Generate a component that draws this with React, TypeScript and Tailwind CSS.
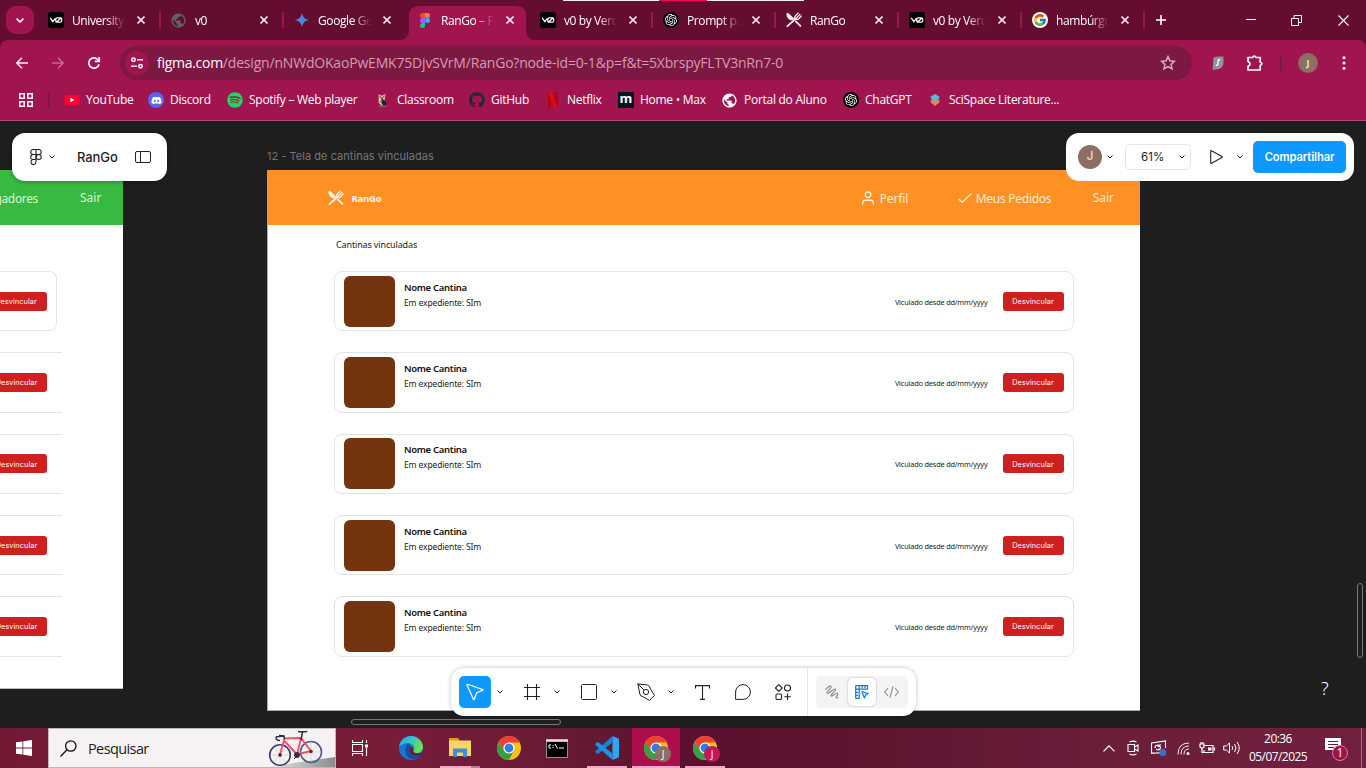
import React from "react";
import { FaDiscord, FaSpotify, FaYoutube, FaGithub } from "react-icons/fa";
import { SiOpenai } from "react-icons/si";
import { FcGoogle } from "react-icons/fc";
import { MdPublic } from "react-icons/md";

function V0() {
  return (
    <svg viewBox="0 0 16 16" className="size-4">
      <rect width="16" height="16" rx="2.5" fill="#000" />
      <path d="M2.2 5.8 4.900 9.600 7.300 6.300M7.800 7.200v2q0 1 1.200 1h3.400q1.300 0 1.300-1.200V7.100q0-1.200-1.300-1.200H9.100q-1.300 0-1.300 1.300M8.600 9.800 13 6.200" fill="none" stroke="#fff" strokeWidth="1.2" />
    </svg>
  );
}

function Cutlery({ className }: { className: string }) {
  return (
    <svg viewBox="0 0 16 16" className={className} fill="none" stroke="#fdf6f0" strokeLinecap="round">
      <path d="M.6 1C0 3.800 1.800 7 4.600 8.200L6.900 8 8 6.400 2.600 1.200Q1.200.3.600 1Z" fill="#fdf6f0" stroke="none" />
      <path d="M10 9.600 14.400 13.800M1.400 14.200 9.600 6.800" strokeWidth="1.8" />
      <path d="M8.700 7.300C8.100 5.600 8.700 4.500 9.800 3.400L12 1.200M9.800 6.600 13.900 2.400M9 7.500c1.700.5 3 0 4-1L15.200 4" strokeWidth="1.3" />
    </svg>
  );
}

function FigmaMark() {
  return (
    <svg viewBox="0 0 10 15" className="h-[15px] w-2.5">
      <path d="M5 0H2.5a2.5 2.5 0 0 0 0 5H5Z" fill="#f24e1e" />
      <path d="M5 0h2.5a2.5 2.5 0 0 1 0 5H5Z" fill="#ff7262" />
      <path d="M5 5H2.5a2.5 2.5 0 0 0 0 5H5Z" fill="#a259ff" />
      <circle cx="7.5" cy="7.5" r="2.5" fill="#1abcfe" />
      <path d="M5 10H2.5A2.5 2.5 0 1 0 5 12.5Z" fill="#0acf83" />
    </svg>
  );
}

function Gpt() {
  return (
    <span className="grid size-4 place-items-center rounded-full bg-black">
      <SiOpenai className="size-3 text-white" />
    </span>
  );
}

function Gemini() {
  return (
    <svg viewBox="0 0 16 16" className="size-4">
      <defs>
        <linearGradient id="gem" x1="0" y1="1" x2="1" y2="0">
          <stop offset="0" stopColor="#6b8ff0" />
          <stop offset=".6" stopColor="#3f8ae0" />
          <stop offset="1" stopColor="#6f7fd8" />
        </linearGradient>
      </defs>
      <path d="M8 1C8.9 5.300 10.700 7.100 15 8 10.700 8.900 8.900 10.700 8 15 7.100 10.700 5.300 8.900 1 8 5.300 7.100 7.100 5.300 8 1Z" fill="url(#gem)" />
    </svg>
  );
}

function Cross() {
  return (
    <svg viewBox="0 0 8 8" className="size-2 shrink-0" stroke="#f6e6ec" strokeWidth="1.6">
      <path d="M.5.5l7 7M7.500.5l-7 7" />
    </svg>
  );
}

type TabInfo = { title: string; icon: React.ReactNode; active?: boolean; divider?: boolean };
const tabs: TabInfo[] = [
  { title: "University", icon: <V0 />, divider: true },
  { title: "v0", icon: <MdPublic className="-ml-0.5 size-[17px] text-[#5f6368]" />, divider: true },
  { title: "Google Ge", icon: <Gemini /> },
  { title: "RanGo – F", icon: <FigmaMark />, active: true },
  { title: "v0 by Verc", icon: <V0 />, divider: true },
  { title: "Prompt pa", icon: <Gpt />, divider: true },
  { title: "RanGo", icon: <Cutlery className="size-4" />, divider: true },
  { title: "v0 by Verc", icon: <V0 />, divider: true },
  { title: "hambúrgu", icon: <FcGoogle className="size-4 rounded-full bg-white p-px" />, divider: true },
];

function Tab({ title, icon, active, divider }: TabInfo) {
  return (
    <div className="relative flex h-10 w-[123px] shrink-0 items-center">
      {active && (
        <svg viewBox="0 0 137 34" className="absolute -left-[9px] top-1.5 h-[34px] w-[137px]" fill="#a0154f">
          <path d="M0 34Q10 34 10 24V10Q10 0 20 0H117Q127 0 127 10V24Q127 34 137 34Z" />
        </svg>
      )}
      <div className="relative flex flex-1 items-center pl-[9px]">
        <span className="grid size-4 place-items-center">{icon}</span>
        <span className="ml-2 w-[53px] overflow-hidden whitespace-nowrap pt-px text-[12px] leading-4 tracking-[-0.400px] text-white [mask-image:linear-gradient(to_right,#000_65%,transparent_100%)]">
          {title}
        </span>
        <span className="ml-3">
          <Cross />
        </span>
      </div>
      {divider && <span className="mr-px h-4 w-0.5 bg-[#a0154f]" />}
    </div>
  );
}

function TabStrip() {
  return (
    <div className="relative flex h-10 bg-[#650d30]">
      <div className="flex w-[39px] items-center pl-1.5">
        <div className="grid size-7 place-items-center rounded-[10px] bg-[#a0154f]">
          <svg viewBox="0 0 8 5" className="h-[5px] w-2" fill="none" stroke="#fff" strokeWidth="1.6">
            <path d="M.6.6 4 4 7.400.6" />
          </svg>
        </div>
      </div>
      {tabs.map((t, i) => (
        <Tab key={i} {...t} />
      ))}
      <div className="flex flex-1 items-center pl-[10px]">
        <svg viewBox="0 0 10 10" className="size-2.5" stroke="#fff" strokeWidth="1.6">
          <path d="M5 0v10M0 5h10" />
        </svg>
        <svg viewBox="0 0 10 10" className="ml-20 size-2.5" stroke="#fff">
          <path d="M0 4.500h10" />
        </svg>
        <svg viewBox="0 0 11 11" className="ml-[35px] size-[11px]" fill="none" stroke="#fff">
          <path d="M.5 3.500h7v7h-7zM3 3.500V.5h7.500v7H7.500" />
        </svg>
        <svg viewBox="0 0 11 11" className="ml-9 size-[11px]" stroke="#fff" strokeWidth="1.100">
          <path d="M.5.5l10 10M10.500.5l-10 10" />
        </svg>
      </div>
      <div className="absolute left-[563px] top-0 flex h-px w-[241px] bg-[#f1eef0]">
        <span className="ml-24 h-px w-12 bg-[#f0095f]" />
      </div>
    </div>
  );
}

function Toolbar() {
  return (
    <div className="bg-[#650d30]">
      <div className="flex h-[46px] items-center rounded-t-lg bg-[#a0154f]">
        <svg viewBox="0 0 12 12" className="ml-4 size-3" fill="none" stroke="#fbe9f0" strokeWidth="1.600">
          <path d="M12 6H1M6 .8.8 6 6 11.200" />
        </svg>
        <svg viewBox="0 0 12 12" className="ml-6 size-3" fill="none" stroke="#c4688f" strokeWidth="1.600">
          <path d="M0 6h11M6 .8 11.200 6 6 11.200" />
        </svg>
        <svg viewBox="0 0 14 14" className="ml-[23px] size-3.5" fill="none" stroke="#fff" strokeWidth="1.700">
          <path d="M12 8.200A5.200 5.200 0 1 1 11.200 4L12 5" />
          <path d="M12.200 1v4.400H7.800" />
        </svg>
        <div className="ml-[19px] flex h-[34px] w-[1072px] items-center rounded-full bg-[#7d1842] pl-[5px]">
          <span className="grid size-6 place-items-center rounded-full bg-[#a0154f]">
            <svg viewBox="0 0 12 12" className="size-3" fill="none" stroke="#fff" strokeWidth="1.500">
              <circle cx="2.500" cy="2.800" r="1.700" />
              <path d="M6.200 2.800H12M0 9.200h5.800" />
              <circle cx="9.500" cy="9.200" r="1.700" />
            </svg>
          </span>
          <span className="ml-2 flex-1 whitespace-nowrap text-[14px] leading-5 tracking-[-0.190px] text-[#d39bb4]">
            <span className="tracking-[-0.280px] text-white">figma.com</span>/design/nNWdOKaoPwEMK75DjvSVrM/RanGo?node-id=0-1&amp;p=f&amp;t=5XbrspyFLTV3nRn7-0
          </span>
          <svg viewBox="0 0 16 16" className="mr-4 size-4" fill="none" stroke="#d3b9c6" strokeWidth="1.400">
            <path d="m8 1.600 1.900 4.200 4.500.5-3.300 3.100.9 4.500L8 11.600l-4 2.300.9-4.500L1.600 6.300l4.500-.5Z" />
          </svg>
        </div>
        <svg viewBox="0 0 12 14" className="ml-5 h-3.5 w-3">
          <path d="M1.500 1.500Q5 0 11.500.5V7q-.5 5-5 6L.5 14Z" fill="#8f9296" />
          <path d="M8.300 3.500Q6 3.500 6 5.500V7.500q0 2-2.300 2" fill="none" stroke="#fff" strokeWidth="1.300" />
        </svg>
        <svg viewBox="0 0 16 16" className="ml-[23px] size-4" fill="none" stroke="#fff" strokeWidth="1.700">
          <path d="M1 2.500H5.500Q7.200-.5 9 2.500H13.200V7Q16.500 8.700 13.200 10.400V15H1V11.400Q5 9 1 6.400Z" strokeLinejoin="round" />
        </svg>
        <span className="ml-[17px] h-4 w-0.5 bg-[#7d1842]" />
        <span className="ml-4 grid size-5 place-items-center rounded-full bg-[#8d6e63] text-[9px] font-bold text-[#efe6e3]">J</span>
        <svg viewBox="0 0 4 14" className="ml-6 h-3.5 w-1" fill="#fff">
          <circle cx="2" cy="1.700" r="1.500" />
          <circle cx="2" cy="7" r="1.500" />
          <circle cx="2" cy="12.300" r="1.500" />
        </svg>
      </div>
    </div>
  );
}

function Owl() {
  return (
    <svg viewBox="0 0 12 16" className="h-3.5 w-3">
      <path d="M1 1 4 3l5-2-1 6-3 8-4-4Z" fill="#e9b49a" />
      <path d="m4 5 6 6v4l-5-2Z" fill="#1c1f4a" />
      <path d="M1 15h10" stroke="#7a6a55" strokeWidth="1.500" />
      <path d="m2 4 3 2 3-3M3 9l2 3" stroke="#54302a" fill="none" />
    </svg>
  );
}

function Bookmark({ icon, label, width }: { icon: React.ReactNode; label: string; width: string }) {
  return (
    <div className={"flex shrink-0 items-center " + width}>
      <span className="grid size-4 shrink-0 place-items-center">{icon}</span>
      <span className="ml-[6px] whitespace-nowrap text-[12px] leading-4 tracking-[-0.270px] text-white">{label}</span>
    </div>
  );
}

function Bookmarks() {
  return (
    <div className="flex h-[35px] items-center border-b border-[#b3447a] bg-[#a0154f] pb-[6px]">
      <svg viewBox="0 0 14 14" className="ml-[19px] size-3.5" fill="none" stroke="#fff" strokeWidth="1.500">
        <path d="M.8.8h4.400v4.400H.8zM8.800.8h4.400v4.400H8.800zM.8 8.800h4.400v4.400H.8zM8.800 8.800h4.400v4.400H8.800z" />
      </svg>
      <span className="ml-[15px] mr-3.5 h-4 w-0.5 bg-[#7d1842]" />
      <Bookmark width="w-[84px]" label="YouTube" icon={<FaYoutube className="size-4 bg-[linear-gradient(#fff,#fff)] bg-[length:6px_6px] bg-center bg-no-repeat text-[#ff0033]" />} />
      <Bookmark width="w-[79px]" label="Discord" icon={<span className="grid size-4 place-items-center rounded-full bg-[#5865f2]"><FaDiscord className="size-[11px] text-white" /></span>} />
      <Bookmark width="w-[148px]" label="Spotify – Web player" icon={<FaSpotify className="size-4 text-[#1ed760]" />} />
      <Bookmark width="w-[94px]" label="Classroom" icon={<Owl />} />
      <Bookmark width="w-[76px]" label="GitHub" icon={<FaGithub className="size-4 text-[#24292f]" />} />
      <Bookmark
        width="w-[73px]"
        label="Netflix"
        icon={
          <svg viewBox="0 0 10 16" className="h-4 w-2.5">
            <path d="M0 0h3.300v16H0zM6.700 0H10v16H6.700z" fill="#b1060f" />
            <path d="M0 0h3.300L10 16H6.700z" fill="#e50914" />
          </svg>
        }
      />
      <Bookmark width="w-[104px]" label="Home • Max" icon={<span className="grid size-4 place-items-center bg-[#0a1420] pb-1 text-[13px] font-bold leading-3 text-white">m</span>} />
      <Bookmark width="w-[121px]" label="Portal do Aluno" icon={<MdPublic className="-ml-0.5 size-[17px] text-white" />} />
      <Bookmark width="w-[84px]" label="ChatGPT" icon={<Gpt />} />
      <Bookmark
        width="w-[140px]"
        label="SciSpace Literature..."
        icon={
          <svg viewBox="0 0 12 14" className="h-3 w-3">
            <path d="M1 8l5-2 5 2v2l-5 4-5-4Z" fill="#f0883e" />
            <path d="M1 3 6 0l5 3v2L6 9 1 5Z" fill="#5db8dc" />
            <path d="m1 6 5 3 5-3v2l-5 3-5-3Z" fill="#c88c66" />
          </svg>
        }
      />
    </div>
  );
}

function Chevron({ className }: { className: string }) {
  return (
    <svg viewBox="0 0 6 4" className={"h-1 w-1.5 shrink-0 " + className} fill="none" stroke="#222" strokeWidth="1">
      <path d="M.5.5 3 3 5.500.5" />
    </svg>
  );
}

function Unlink() {
  return (
    <span className="grid h-[19px] w-[61px] shrink-0 place-items-center rounded-[3px] bg-[#cf2020] pt-px font-['Inter',sans-serif] text-[7.300px] leading-none tracking-[0.080px] text-white">
      Desvincular
    </span>
  );
}

function CanteenCard() {
  return (
    <div className="flex h-[60.500px] w-[739.500px] items-center rounded-[8px] border border-[#e3e3e3] px-[9px]">
      <div className="-ml-[0.500px] size-[51px] rounded-[6px] bg-[#743410]" />
      <div className="ml-[9.500px] flex-1 self-start pt-[8.800px] font-['Noto_Sans',sans-serif] text-[#111]">
        <div className="text-[9.500px] font-semibold leading-[14px] tracking-[-0.300px]">Nome Cantina</div>
        <div className="text-[8.500px] leading-[15px] tracking-[-0.120px] text-[#222]">Em expediente: SIm</div>
      </div>
      <span className="mr-[15px] pt-[2px] font-['Noto_Sans',sans-serif] text-[7.300px] tracking-[-0.160px] text-[#222]">Viculado desde dd/mm/yyyy</span>
      <Unlink />
    </div>
  );
}

function MainFrame() {
  return (
    <div className="absolute left-[267px] top-[49px] flex h-[541px] w-[873px] flex-col border-b border-l border-[#aaa] bg-white">
      <div className="-ml-px flex h-[55.400px] items-center bg-[#ff9124] pt-px font-['Noto_Sans',sans-serif] text-[12px] text-[#ffead2]">
        <Cutlery className="-mt-px ml-[60.500px] size-4" />
        <span className="ml-2 pt-px text-[9.500px] font-bold tracking-[-0.180px] text-[#fff3e6]">RanGo</span>
        <div className="ml-auto flex items-center pr-[26px]">
          <svg viewBox="0 0 12 14" className="-mt-px h-3.500 w-3" fill="none" stroke="#fff3e4" strokeWidth="1.400">
            <circle cx="6" cy="3.800" r="2.800" />
            <path d="M.7 13.500V12q0-2.700 2.700-2.700h5.200q2.700 0 2.700 2.700v1.500" />
          </svg>
          <span className="ml-1.5 w-[78px] pt-px tracking-[-0.100px]">Perfil</span>
          <svg viewBox="0 0 14 10" className="h-2.5 w-3.5" fill="none" stroke="#fff3e4" strokeWidth="1.200">
            <path d="m.6 6 3.600 3.300L13.500.6" />
          </svg>
          <span className="ml-1 w-[117px] pt-px tracking-[-0.260px]">Meus Pedidos</span>
          <span>Sair</span>
        </div>
      </div>
      <div className="pl-[68px] pt-[12.600px] font-['Noto_Sans',sans-serif] text-[9px] leading-[14px] tracking-[-0.140px] text-[#222]">Cantinas vinculadas</div>
      <div className="ml-[66px] mt-[19px] flex flex-col gap-[20.800px]">
        {[0, 1, 2, 3, 4].map((i) => (
          <CanteenCard key={i} />
        ))}
      </div>
    </div>
  );
}

function SideFrame() {
  return (
    <div className="absolute left-0 top-[49px] h-[519px] w-[123px] overflow-hidden border-b border-[#bbb] bg-white">
      <div className="flex h-[55.400px] items-center bg-[#38b93f] pt-px font-['Noto_Sans',sans-serif] text-[12px] text-[#d9f3da]">
        <div className="flex w-[80px] justify-end pr-[42px] pt-px">
          <span className="tracking-[-0.350px]">Entregadores</span>
        </div>
        <span>Sair</span>
      </div>
      <div className="mt-[45.600px] flex flex-col gap-[20.800px]">
        {[0, 1, 2, 3, 4].map((i) => (
          <div
            key={i}
            className={
              i === 0
                ? "flex h-[60.500px] w-[56.500px] items-center justify-end rounded-r-[8px] border-y border-r border-[#e3e3e3] pr-[9px]"
                : "flex h-[60.500px] w-[62px] items-center justify-end border-y border-[#e3e3e3] pr-[15px]"
            }
          >
            <Unlink />
          </div>
        ))}
      </div>
    </div>
  );
}

function FilePanel() {
  return (
    <div className="absolute left-3 top-3 flex h-12 w-[155px] items-center rounded-[13px] bg-white shadow-[0_1px_4px_rgba(0,0,0,.3)]">
      <svg viewBox="0 0 12 16" className="ml-[18px] h-4 w-3" fill="none" stroke="#222" strokeWidth="1.100">
        <path d="M6 .5H3.200a2.500 2.500 0 0 0 0 5H6ZM6 .5h2.800a2.500 2.500 0 0 1 0 5H6ZM6 5.500H3.200a2.500 2.500 0 0 0 0 5H6ZM6 10.500H3.200A2.500 2.500 0 1 0 6 13Z" />
        <circle cx="8.700" cy="8" r="2.500" />
      </svg>
      <Chevron className="ml-[7px]" />
      <span className="ml-[22px] w-[58px] pt-px font-['Inter',sans-serif] text-[13px] font-medium tracking-[-0.080px] text-[#1e1e1e]">RanGo</span>
      <svg viewBox="0 0 16 12" className="h-3 w-4" fill="none" stroke="#222">
        <rect x=".5" y=".5" width="15" height="11" rx="1.500" />
        <path d="M5.500.5v11" />
      </svg>
    </div>
  );
}

function SharePanel() {
  return (
    <div className="absolute left-[1066px] top-3 flex h-12 w-[288px] items-center rounded-[13px] bg-white font-['Inter',sans-serif]">
      <span className="ml-3 grid size-6 place-items-center rounded-full bg-[#8d6e63] text-[11.500px] font-medium text-[#eee3df]">J</span>
      <Chevron className="ml-[5px]" />
      <span className="ml-3 flex h-[26px] w-[66px] items-center rounded-[5px] border border-[#e4e4e4] pl-[15px] text-[11.500px] text-[#222]">
        <span className="w-[38px] pt-px tracking-[0.100px]">61%</span>
        <Chevron className="" />
      </span>
      <svg viewBox="0 0 13 14" className="ml-[19px] h-3.5 w-[13px]" fill="none" stroke="#222" strokeWidth="1.100" strokeLinejoin="round">
        <path d="M.7 1.200v11.600q0 .8.800.4L12 7.500q.6-.5 0-1L1.500.8Q.7.400.7 1.200Z" />
      </svg>
      <Chevron className="ml-[14px]" />
      <span className="ml-[10px] grid h-8 w-[93px] place-items-center rounded-[5px] bg-[#0d99ff] pt-px text-[11.200px] font-semibold tracking-[-0.100px] text-white">Compartilhar</span>
    </div>
  );
}

function BottomBar() {
  return (
    <div className="absolute left-[451px] top-[547px] flex h-12 w-[465px] items-center rounded-[13px] bg-white shadow-[0_0_4px_rgba(0,0,0,.25)]">
      <span className="ml-2 grid size-8 place-items-center rounded-[5px] bg-[#0d99ff]">
        <svg viewBox="0 0 18 18" className="size-[18px]" fill="none" stroke="#fff" strokeWidth="1.200" strokeLinejoin="round">
          <path d="M1.600 1.300 16.700 6.600q.6.400 0 .8L10.700 9.800 8.300 16.300q-.4.600-.9 0L1 2q-.1-.8.600-.7Z" />
        </svg>
      </span>
      <Chevron className="ml-[5.500px]" />
      <svg viewBox="0 0 16 16" className="ml-[21.500px] size-4" stroke="#222" strokeWidth="1.100">
        <path d="M3.500 0v16M12.500 0v16M0 3.500h16M0 12.500h16" />
      </svg>
      <Chevron className="ml-[13.500px]" />
      <svg viewBox="0 0 16 16" className="ml-[21.500px] size-4" fill="none" stroke="#222">
        <rect x=".5" y=".5" width="15" height="15" rx="1" />
      </svg>
      <Chevron className="ml-[13.500px]" />
      <svg viewBox="0 0 18 18" className="ml-[20.500px] size-[18px]" fill="none" stroke="#222" strokeLinejoin="round">
        <path d="M.8.8 10.500 2Q12.800 2.800 13.500 6L17.500 12.500 12.500 17.400 6.500 14Q3.500 13.500 2.800 11ZM.8.800 7 7" />
        <circle cx="9" cy="9" r="2.600" />
      </svg>
      <Chevron className="ml-[12.500px]" />
      <svg viewBox="0 0 15 15" className="ml-[21.500px] size-[15px]" fill="none" stroke="#222" strokeWidth="1.100">
        <path d="M.5 3.500V.6h14v2.900M7.500.6v13.800M5 14.400h5" />
      </svg>
      <svg viewBox="0 0 16 16" className="ml-[25px] size-4" fill="none" stroke="#222">
        <path d="M.6 15.400V8A7.400 7.400 0 1 1 8 15.400Z" strokeLinejoin="round" />
      </svg>
      <svg viewBox="0 0 16 16" className="ml-6 size-4" fill="none" stroke="#222" strokeWidth="1.100" strokeLinejoin="round">
        <path d="M3.800.6 7.200 4 3.800 7.400.4 4ZM12.500 9.500v6.500M9.300 12.700h6.500" />
        <circle cx="12.500" cy="4" r="3" />
        <rect x="1" y="10" width="5.500" height="5.500" rx="1.200" />
      </svg>
      <span className="ml-4 h-full w-px bg-[#e6e6e6]" />
      <div className="ml-2 flex h-8 w-[92px] items-center rounded-[5px] bg-[#f4f4f4]">
        <svg viewBox="0 0 14 14" className="ml-[9px] size-3.5" fill="none" stroke="#8a8a8a" strokeWidth="1.100" strokeLinecap="round" strokeLinejoin="round">
          <path d="M.8 4.500Q4 .5 6 1.300C7.500 2.800 1.500 6 2 8 3 9.800 9 2.800 10.500 4.200 11.500 6 5.500 8.800 6 10.800 7 12.300 11 7.200 12.600 8.400 13.600 9.800 10.600 11 11.200 12.600Q12 13.200 13 12.300" />
        </svg>
        <span className="ml-[9px] grid size-7 place-items-center rounded-[5px] bg-white shadow-[0_0_2px_rgba(0,0,0,.3)]">
          <svg viewBox="0 0 14 14" className="size-3.5" fill="none" stroke="#0a7de0" strokeWidth="1.200" strokeLinejoin="round">
            <path d="M4.200 13.300H.7V.7h11.800v3.500H4.200ZM4.200.7v3.500H.7M1 7.300h2M1 10.300h2M7.200 1v2M10 1v2M7 6.500l6.300 2-2.700 1.400-1.300 3Z" />
          </svg>
        </span>
        <svg viewBox="0 0 15 12" className="ml-2 h-3 w-[15px]" fill="none" stroke="#8a8a8a" strokeWidth="1.100">
          <path d="M4 2 .8 6 4 10M11 2l3.200 4L11 10M9 .3 6 11.700" />
        </svg>
      </div>
    </div>
  );
}

function Canvas() {
  return (
    <div className="relative h-[607px] overflow-hidden bg-[#1e1e1e]">
      <SideFrame />
      <span className="absolute left-[267px] top-[27px] whitespace-nowrap font-['Inter',sans-serif] text-[11px] leading-4 tracking-[0.030px] text-[#757575]">12 - Tela de cantinas vinculadas</span>
      <MainFrame />
      <FilePanel />
      <SharePanel />
      <BottomBar />
      <span className="absolute left-[351px] top-[598px] h-[6px] w-[210px] rounded-full border border-[#777]" />
      <span className="absolute left-[1357px] top-[462px] h-[75px] w-[6px] rounded-full border border-[#777]" />
      <span className="absolute left-[1321px] top-[557px] font-['Noto_Sans',sans-serif] text-[18px] font-light leading-5 text-white">?</span>
    </div>
  );
}

function Chrome({ badge }: { badge?: string }) {
  return (
    <span className="relative block size-6">
      <svg viewBox="0 0 24 24" className="size-6">
        <circle cx="12" cy="12" r="12" fill="#fbc116" />
        <path d="M1.600 6A12 12 0 0 0 12 24L16.800 14.800 7.200 14.800Z" fill="#34a045" />
        <path d="M1.600 6A12 12 0 0 1 22.700 6.500H12L7.200 14.800Z" fill="#ea4335" />
        <circle cx="12" cy="12" r="5.600" fill="#fff" />
        <circle cx="12" cy="12" r="4.400" fill="#2f7de9" />
      </svg>
      {badge && (
        <span className={"absolute left-[11px] top-[10px] grid size-4 place-items-center rounded-full text-[10px] leading-none text-white " + badge}>J</span>
      )}
    </span>
  );
}

function Task({ children, tile, bar }: { children: React.ReactNode; tile: string; bar?: string }) {
  return (
    <div className={"relative grid h-10 w-12 shrink-0 place-items-center " + tile}>
      {children}
      {bar && <span className={"absolute bottom-0 h-0.5 bg-[#f6a6c6] " + bar} />}
    </div>
  );
}

function Bike() {
  return (
    <svg viewBox="0 0 68 38" className="h-[38px] w-[68px]" fill="none">
      <defs>
        <linearGradient id="road" x1="0" y1="0" x2="1" y2="0">
          <stop offset="0" stopColor="#eee" />
          <stop offset="1" stopColor="#8c8c8c" />
        </linearGradient>
      </defs>
      <path d="M0 38 68 28V38Z" fill="url(#road)" />
      <circle cx="13" cy="26" r="10.300" stroke="#383c66" strokeWidth="1.600" />
      <circle cx="44" cy="23" r="10.500" stroke="#4b5c87" strokeWidth="1.600" />
      <path d="M13 16v20M4 26h18M7 19l12 14M19 19 7 33M44 13v20M34 23h20M37 16l14 14M51 16 37 30" stroke="#b9bccb" strokeWidth=".5" />
      <path d="M13 26 17.500 9.500 34 9 30 25.500 17 11.500M30 25.500 44 22 34 9" stroke="#ef5361" strokeWidth="1.900" strokeLinejoin="round" />
      <path d="M34 11 35.500 3M31 2.800h8L40 2M17.500 10 17 7 9.500 7.800Q8 10 11 11.300L13 11.500M17 7l-5-.5" stroke="#2a2d49" strokeWidth="1.500" />
      <circle cx="30" cy="26" r="3" fill="#3c3152" />
      <path d="m27 30 5-5" stroke="#222" />
      <circle cx="13" cy="26" r="1.700" fill="#222" />
      <circle cx="44" cy="22.500" r="1.700" fill="#722" />
    </svg>
  );
}

function Taskbar() {
  return (
    <div className="flex h-10 bg-[linear-gradient(90deg,#721a33_0%,#771d38_30%,#661a35_42%,#5a102e_50%,#5c1530_62%,#6b1d3a_80%,#71213f_100%)]">
      <div className="grid w-12 place-items-center">
        <svg viewBox="0 0 16 16" className="size-4" fill="#fff">
          <path d="M0 2.300 6.500 1.400V7.600H0ZM7.300 1.300 16 0V7.600H7.300ZM0 8.400H6.500V14.600L0 13.700ZM7.300 8.400H16V16L7.300 14.700Z" />
        </svg>
      </div>
      <div className="flex w-72 items-center border border-[#bdb6b9] bg-[#f6f2f4] pl-[11px]">
        <svg viewBox="0 0 17 17" className="size-[17px]" fill="none" stroke="#111" strokeWidth="1.300">
          <circle cx="10.800" cy="6" r="5.200" />
          <path d="M7 9.800.5 16.500" />
        </svg>
        <span className="ml-[11px] flex-1 pt-px text-[14.500px] tracking-[-0.600px] text-[#222]">Pesquisar</span>
        <Bike />
      </div>
      <Task tile="">
        <svg viewBox="0 0 16 16" className="size-4" fill="none" stroke="#fff" strokeWidth="1.100">
          <path d="M.5 0v2.500h10V0M.5 16v-2.500h10V16M.5 4.500h10v7H.5zM14.500 0v3M14.500 8v8" />
          <path d="M13 4.500h3v3h-3z" fill="#fff" stroke="none" />
        </svg>
      </Task>
      <div className="w-[3px]" />
      <Task tile="">
        <svg viewBox="0 0 24 24" className="size-6">
          <defs>
            <linearGradient id="edgeTop" x1="0" y1="0" x2="1" y2=".4">
              <stop offset="0" stopColor="#2aa5dc" />
              <stop offset=".5" stopColor="#33c4d0" />
              <stop offset="1" stopColor="#67e04f" />
            </linearGradient>
          </defs>
          <circle cx="12" cy="12" r="12" fill="#1379d2" />
          <path d="M0 11.500C.5 5 5.500 0 12 0S24 5.500 24 10.800C24 14.500 21.500 17 18 17S13.800 15.500 14.600 14.200C16.500 11.500 14.500 7.200 9 7.200 4.500 7.200 1 9 0 11.500Z" fill="url(#edgeTop)" />
          <path d="M9 7.200C5 11 5.500 18 9.500 21.500 13 24.500 18 24 22 18.800 17 21 12 19 10.600 16 9.600 13.500 10.500 11.500 11.800 11 11.500 9 10.500 7.500 9 7.200Z" fill="#174c9e" />
          <path d="M14.600 14.200Q13.500 16 16.500 17.200T24 16V18L22 19Q15 21 11.800 17.500T11.800 11Q13 10.500 14.600 14.200Z" fill="#671a37" />
        </svg>
      </Task>
      <div className="w-px" />
      <Task tile="" bar="left-1 w-[31px]">
        <svg viewBox="0 0 22 20" className="h-5 w-[22px]">
          <path d="M0 0h9l2 3H0Z" fill="#e39b10" />
          <path d="M0 2.500h22V18H0Z" fill="#fbd467" />
          <path d="M4 19V10.500h14V19h-4v-4.500H8V19Z" fill="#3a90d2" />
        </svg>
        <span className="absolute bottom-0 left-[35px] h-0.5 w-[9px] bg-[#b97d97]" />
      </Task>
      <div className="w-px" />
      <Task tile=""><Chrome /></Task>
      <Task tile="">
        <svg viewBox="0 0 22 19" className="h-[19px] w-[22px]">
          <rect width="22" height="19" fill="#8c8c8c" />
          <rect x="1" y="3" width="20" height="15" fill="#000" />
          <path d="M0 .5h22v2H0z" fill="#e6e6e6" />
          <path d="M5 6H3v3h2M7 6v1M7 8v1M9 5l2.500 4.500M13 9h5" stroke="#fff" fill="none" />
        </svg>
      </Task>
      <div className="w-0.5" />
      <Task tile="" bar="left-1 w-10">
        <svg viewBox="0 0 24 24" className="size-6">
          <path d="M17.500 0 24 2.800V21.200L17.500 24Z" fill="#2aa8f2" />
          <path d="M17.500 0V6.500L3 18 .5 16.500V15Z" fill="#1583d0" />
          <path d="M17.500 24V17.500L3 6 .5 7.500V9Z" fill="#1b94e0" />
        </svg>
      </Task>
      <div className="w-px" />
      <Task tile="bg-[#ad0f4d]" bar="left-0 w-12"><Chrome badge="bg-[#8d6e63]" /></Task>
      <div className="w-px" />
      <Task tile="" bar="left-1 w-10"><Chrome badge="bg-[#c2185b]" /></Task>
      <div className="ml-auto flex items-center">
        <svg viewBox="0 0 12 7" className="h-[7px] w-3" fill="none" stroke="#fff" strokeWidth="1.200"><path d="M.5 6.300 6 .8l5.500 5.500" /></svg>
        <svg viewBox="0 0 12 16" className="ml-3 h-4 w-3" fill="none" stroke="#fff" strokeWidth="1.100">
          <path d="M2.500 2Q6 .2 9.500 2M2.500 14Q6 15.800 9.500 14M1 4.500h6.500v7H1zM7.500 7 11 5v6L7.500 9" />
        </svg>
        <svg viewBox="0 0 17 16" className="ml-[11px] h-4 w-[17px]" fill="none" stroke="#fff" strokeWidth="1.100">
          <path d="M11 12.500 1.500 13.500V3L15.500 1v7M1 13h10M5 8q0-3 3-3l2 1.500M10 4v2.500H7.500M10.500 7q0 3-3 3L6 9" />
          <circle cx="12.700" cy="12.500" r="3.500" fill="#2a78c8" stroke="none" />
        </svg>
        <svg viewBox="0 0 13 13" className="ml-[10px] size-[13px]" fill="none" stroke="#fff">
          <path d="M1 12.500Q1 1 12 1M4 12.500Q4 4 12 4M7 12.500Q7 7 12 7" opacity=".9" />
          <circle cx="11" cy="11.500" r="1.500" fill="#fff" stroke="none" />
        </svg>
        <svg viewBox="0 0 17 12" className="ml-[9px] h-3 w-[17px]" fill="none" stroke="#fff" strokeWidth="1.200">
          <path d="M5.500 3.500H14v7H5V8M15.500 5.500v3" />
          <path d="M1 2h4v3L3 6.500 1 5ZM2 0v2M4 0v2M3 6.500v4h3" />
          <path d="M9 5.500h3.500v3H9z" fill="#fff" stroke="none" />
        </svg>
        <svg viewBox="0 0 17 14" className="ml-[7px] h-3.5 w-[17px]" fill="none" stroke="#fff">
          <path d="M.7 5h2.600L6.500 2v10L3.300 9H.7ZM9 5q1.500 2 0 4M11.500 3q3 4 0 8M14 1q4.500 6 0 12" />
        </svg>
        <div className="ml-[8px] w-[60px] whitespace-nowrap text-center text-[12px] leading-[18px] tracking-[-0.560px] text-white">
          <div>20:36</div>
          <div>05/07/2025</div>
        </div>
        <div className="relative ml-[17px] h-5 w-[36px]">
          <svg viewBox="0 0 17 16" className="h-4 w-[17px]">
            <path d="M0 0h16v12h-4v4l-4-4H0Z" fill="#fff" />
            <path d="M3 3.500h10M3 6.500h10M3 9.500h6" stroke="#6b1d3a" />
          </svg>
          <span className="absolute left-[7px] top-[7px] grid size-4 place-items-center rounded-full border border-[#c5829e] bg-[#a3114c] text-[12px] leading-none text-white">1</span>
        </div>
        <span className="mr-1 h-10 w-px bg-[#a76f86]" />
      </div>
    </div>
  );
}

export default function App() {
  return (
    <div className="h-[768px] w-[1366px] overflow-hidden font-['Open_Sans','Noto_Sans',sans-serif]">
      <TabStrip />
      <Toolbar />
      <Bookmarks />
      <Canvas />
      <Taskbar />
    </div>
  );
}
